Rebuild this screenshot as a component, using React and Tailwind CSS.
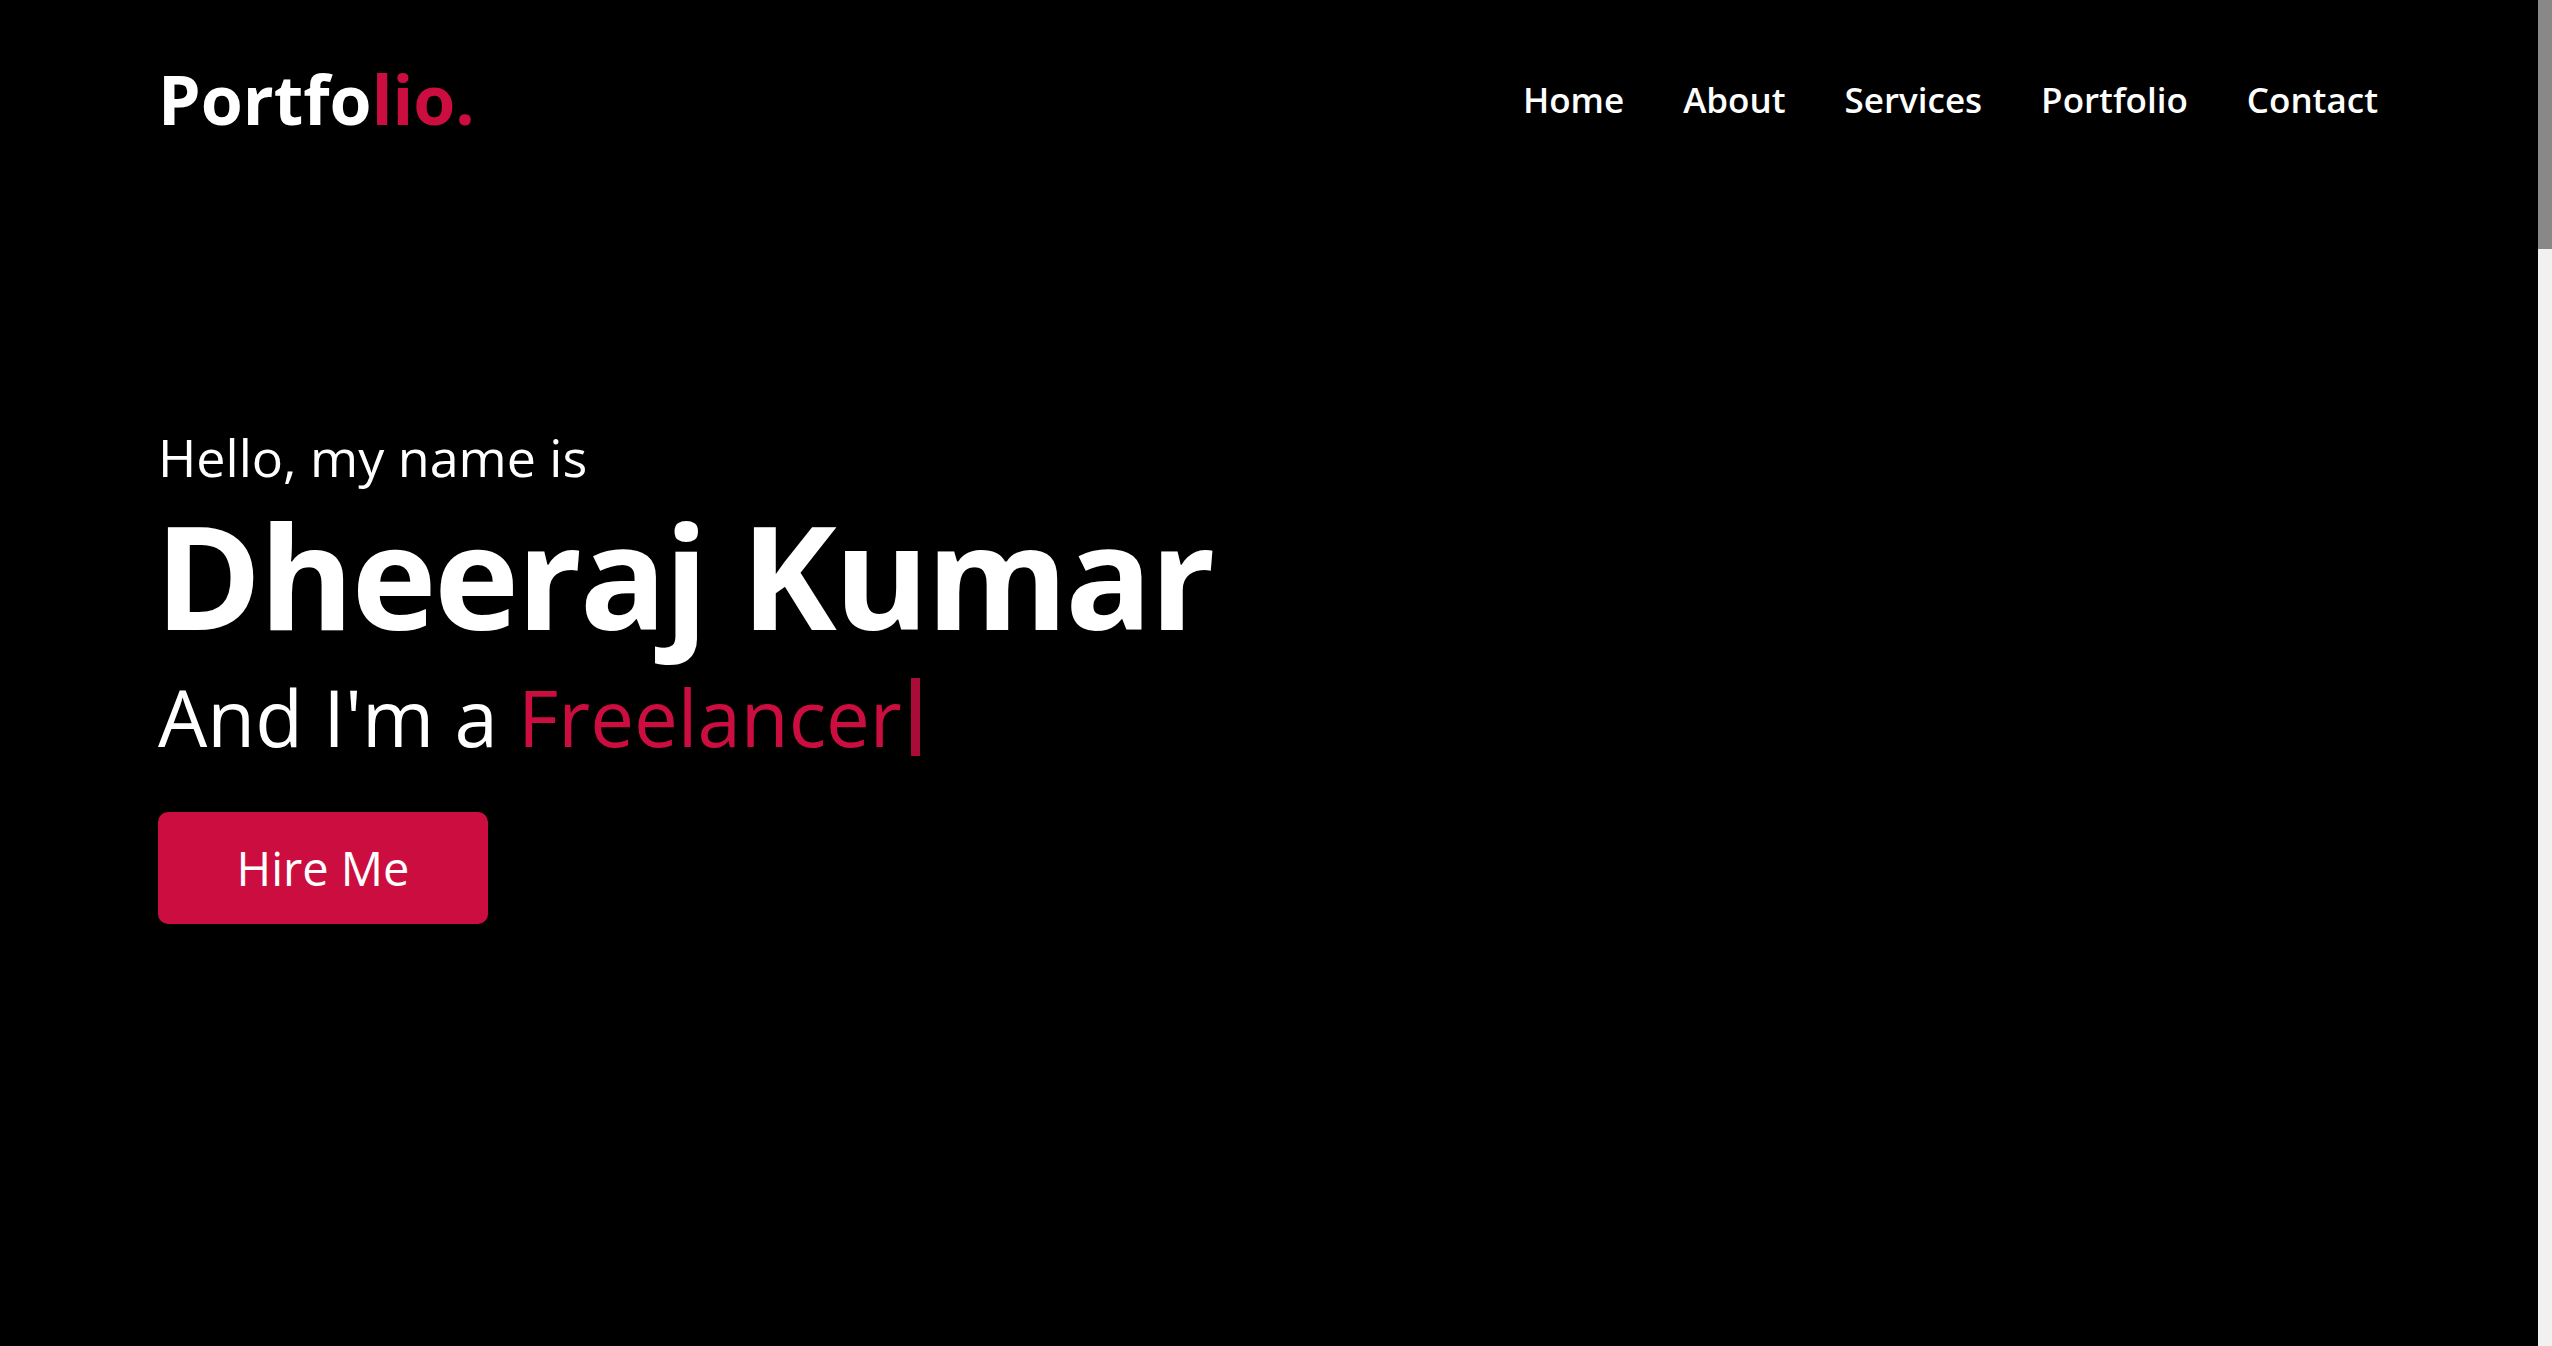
const links = ['Home', 'About', 'Services', 'Portfolio', 'Contact']

export default function App() {
  return (
    <div className="h-screen flex bg-black text-white font-['Open_Sans',sans-serif]">
      <main className="flex-1 overflow-y-auto [scrollbar-width:none]">
        {/* Hero */}
        <section id="home" className="relative h-screen flex flex-col justify-center pt-[9px] px-[158px]">
          {/* Navbar */}
          <header className="absolute top-0 inset-x-0 h-[198px] pl-[158px] pr-[160px] flex items-center justify-between">
            <a href="#home" className="text-[68px] leading-none font-bold">
              Portfo<span className="text-[#cb0e3f]">lio.</span>
            </a>
            <nav className="flex items-center gap-[59px]">
              {links.map((l) => (
                <a key={l} href={`#${l.toLowerCase()}`} className="text-[35px] leading-none font-semibold hover:text-[#cb0e3f] transition-colors">
                  {l}
                </a>
              ))}
            </nav>
          </header>

          <p className="text-[52px] leading-none">Hello, my name is</p>
          <h1 className="mt-[19px] -ml-[3px] text-[144px] leading-none font-bold tracking-[-2.4px]">Dheeraj Kumar</h1>
          <p className="mt-[32px] text-[78px] leading-none flex items-center">
            <span>And I'm a&nbsp;</span>
            <span className="text-[#cb0e3f]">Freelancer</span>
            <span className="ml-[9px] inline-block w-[9px] h-[78px] bg-[#a90c37]" />
          </p>
          <div className="mt-[56px]">
            <a href="#contact" className="w-[330px] h-[112px] rounded-[10px] bg-[#cb0e3f] flex items-center justify-center text-[47px] leading-none">
              Hire Me
            </a>
          </div>
        </section>

        {/* rest of the page, below the fold */}
        <section id="about" className="h-[1480px]" />
        <section id="services" className="h-[1480px]" />
        <section id="portfolio" className="h-[1480px]" />
        <section id="contact" className="h-[1490px]" />
      </main>

      {/* page scrollbar */}
      <aside className="w-[14px] shrink-0 bg-[#f1f1f1]">
        <div className="h-[249px] bg-[#888888]" />
      </aside>
    </div>
  )
}
